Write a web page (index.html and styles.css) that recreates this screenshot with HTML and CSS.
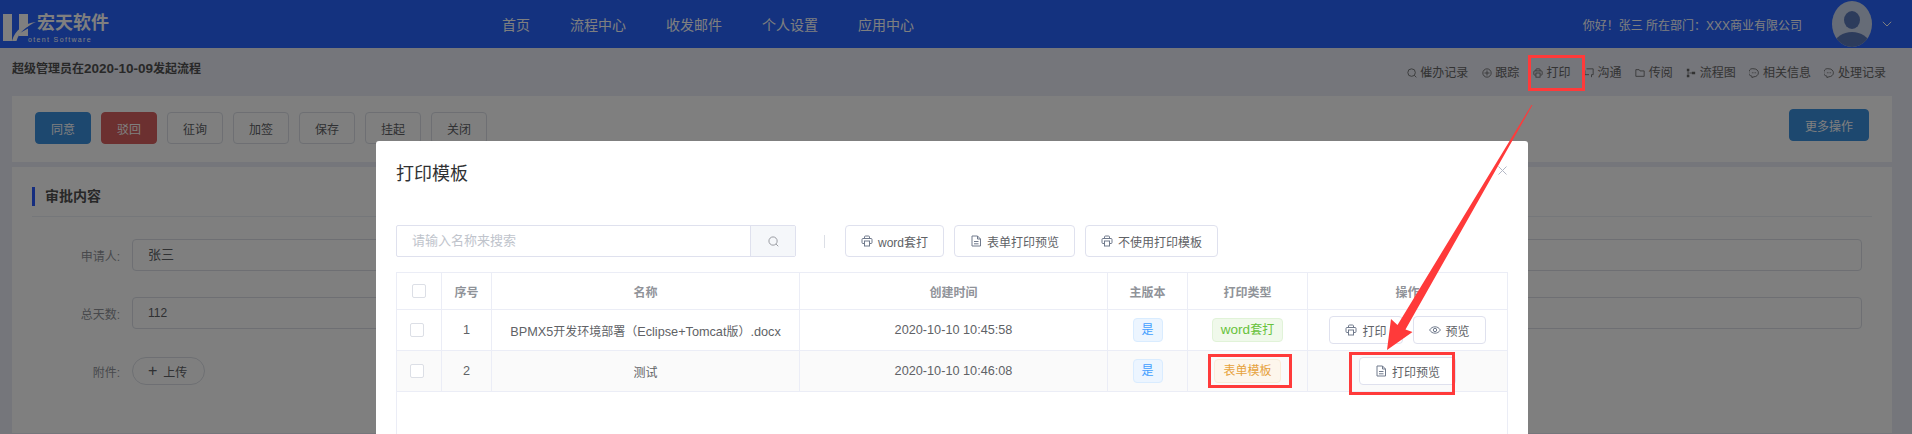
FILE: index.html
```html
<!DOCTYPE html>
<html lang="zh">
<head>
<meta charset="utf-8">
<title>打印模板</title>
<link rel="stylesheet" href="styles.css">
</head>
<body>
<svg class="defs" width="0" height="0" aria-hidden="true">
  <symbol id="i-print" viewBox="0 0 12 12"><path d="M3.500 3.500V2a1 1 0 0 1 1-1h3a1 1 0 0 1 1 1v1.500M3 8.500H2a1 1 0 0 1-1-1V4.500a1 1 0 0 1 1-1h8a1 1 0 0 1 1 1v3a1 1 0 0 1-1 1H9" fill="none" stroke="currentColor"/><rect x="3.500" y="6" width="5" height="5" fill="none" stroke="currentColor"/></symbol>
  <symbol id="i-file" viewBox="0 0 12 12"><path d="M2 1h5.500L10.500 4v7H2zM7.500 1v3h3M4 6.500h4.500M4 8.800h4.500" fill="none" stroke="currentColor"/></symbol>
  <symbol id="i-eye" viewBox="0 0 12 12"><path d="M.6 6C2 3.800 3.900 2.800 6 2.800S10 3.800 11.400 6C10 8.200 8.100 9.200 6 9.200S2 8.200 .6 6z" fill="none" stroke="currentColor"/><circle cx="6" cy="6" r="1.700" fill="none" stroke="currentColor"/></symbol>
  <symbol id="i-search" viewBox="0 0 12 12"><circle cx="5.500" cy="5.500" r="4.500" fill="none" stroke="currentColor"/><path d="M8.800 8.800l2.400 2.400" stroke="currentColor"/></symbol>
  <symbol id="i-track" viewBox="0 0 12 12"><circle cx="6" cy="6" r="5" fill="none" stroke="currentColor"/><path d="M6 3v6M3 6h6" stroke="currentColor"/></symbol>
  <symbol id="i-chat2" viewBox="0 0 12 12"><path d="M3 1h8v7H9v3M1 3v5h5" fill="none" stroke="currentColor"/></symbol>
  <symbol id="i-folder" viewBox="0 0 12 12"><path d="M1 2h4l1 1.500h5V10H1z" fill="none" stroke="currentColor"/></symbol>
  <symbol id="i-flow" viewBox="0 0 12 12"><path d="M1 1h3v3H1zM1 8h3v3H1zM7 4.500h4v3H7z" fill="currentColor"/><path d="M2.500 4v4M4 6h3" stroke="currentColor"/></symbol>
  <symbol id="i-chat" viewBox="0 0 12 12"><path d="M6 1a5 4.500 0 0 1 0 9.500l-2.500 1v-1.700A5 4.500 0 0 1 6 1z" fill="none" stroke="currentColor"/><path d="M3.500 5.700h1M5.500 5.700h1M7.500 5.700h1" stroke="currentColor"/></symbol>
</svg>

<div class="page">
  <header class="top">
    <div class="logo">
      <svg class="logo-h" width="34" height="30" viewBox="0 0 34 30" aria-hidden="true">
        <path d="M0 1h9v27H0zM16 1h9v12.500l-9 3.500z" fill="#fff"/>
        <path d="M9 28C12 17 21 10.500 33 9 24 13 16 19 13.500 28z" fill="#fff"/>
        <path d="M16 20.500l9-5V23H16z" fill="#fff"/>
      </svg>
      <div class="logo-text">
        <span class="logo-cn">宏天软件</span>
        <span class="logo-en">otent Software</span>
      </div>
    </div>
    <nav class="nav">
      <a>首页</a><a>流程中心</a><a>收发邮件</a><a>个人设置</a><a>应用中心</a>
    </nav>
    <div class="user">
      <span class="hello">你好！张三 所在部门：XXX商业有限公司</span>
      <svg class="avatar" width="40" height="48" viewBox="0 0 40 48" aria-hidden="true">
        <defs><clipPath id="av"><ellipse cx="20" cy="24" rx="20" ry="23"/></clipPath></defs>
        <ellipse cx="20" cy="24" rx="20" ry="23" fill="#cdd8ee"/>
        <g clip-path="url(#av)" fill="#5b78b8"><ellipse cx="20" cy="20" rx="8" ry="9"/><ellipse cx="20" cy="44" rx="17" ry="12"/></g>
      </svg>
      <svg class="chev" width="10" height="6" viewBox="0 0 10 6" aria-hidden="true"><path d="M.8.800L5 5l4.200-4.200" fill="none" stroke="#fff"/></svg>
    </div>
  </header>

  <div class="subbar">
    <div class="sub-title">超级管理员在<span class="sub-date">2020-10-09</span>发起流程</div>
    <div class="links">
      <a><svg class="ico"><use href="#i-search"/></svg>催办记录</a>
      <a><svg class="ico"><use href="#i-track"/></svg>跟踪</a>
      <a><svg class="ico"><use href="#i-print"/></svg>打印</a>
      <a><svg class="ico"><use href="#i-chat2"/></svg>沟通</a>
      <a><svg class="ico"><use href="#i-folder"/></svg>传阅</a>
      <a><svg class="ico"><use href="#i-flow"/></svg>流程图</a>
      <a><svg class="ico"><use href="#i-chat"/></svg>相关信息</a>
      <a><svg class="ico"><use href="#i-chat"/></svg>处理记录</a>
    </div>
  </div>

  <section class="card actions">
    <div class="btns">
      <button class="btn primary">同意</button>
      <button class="btn danger">驳回</button>
      <button class="btn">征询</button>
      <button class="btn">加签</button>
      <button class="btn">保存</button>
      <button class="btn">挂起</button>
      <button class="btn">关闭</button>
    </div>
    <button class="btn primary wide">更多操作</button>
  </section>

  <section class="card content">
    <h3 class="sec-head"><span class="sec-title">审批内容</span></h3>
    <div class="form">
      <div class="row"><label class="lbl">申请人:</label><div class="field">张三</div></div>
      <div class="row"><label class="lbl">总天数:</label><div class="field num">112</div></div>
      <div class="row"><label class="lbl">附件:</label><button class="upload"><span class="plus">+</span>上传</button></div>
    </div>
  </section>

  <div class="mask"></div>

  <div class="modal">
    <h2 class="m-title">打印模板</h2>
    <svg class="m-close" width="9" height="9" viewBox="0 0 9 9" aria-hidden="true"><path d="M.5.500l8 8M8.500.500l-8 8" stroke="#b4b8c6"/></svg>
    <div class="m-tools">
      <div class="search">
        <span class="ph">请输入名称来搜索</span>
        <span class="s-btn"><svg class="ico-s"><use href="#i-search"/></svg></span>
      </div>
      <span class="vline"></span>
      <div class="m-btns">
        <button class="mbtn"><svg class="ico-b"><use href="#i-print"/></svg>word套打</button>
        <button class="mbtn"><svg class="ico-b"><use href="#i-file"/></svg>表单打印预览</button>
        <button class="mbtn"><svg class="ico-b"><use href="#i-print"/></svg>不使用打印模板</button>
      </div>
    </div>
    <div class="tbl-wrap">
      <table class="tbl">
        <colgroup><col class="c1"><col class="c2"><col class="c3"><col class="c4"><col class="c5"><col class="c6"><col class="c7"></colgroup>
        <thead>
          <tr><th><span class="check"></span></th><th>序号</th><th>名称</th><th>创建时间</th><th>主版本</th><th>打印类型</th><th>操作</th></tr>
        </thead>
        <tbody>
          <tr>
            <td><span class="check row-check"></span></td>
            <td class="lat">1</td>
            <td><span class="lat">BPMX5</span>开发环境部署（<span class="lat">Eclipse+Tomcat</span>版）<span class="lat">.docx</span></td>
            <td class="lat">2020-10-10 10:45:58</td>
            <td><span class="tag blue">是</span></td>
            <td><span class="tag green"><span class="tag-lat">word</span>套打</span></td>
            <td><div class="ops"><button class="mbtn small"><svg class="ico-b"><use href="#i-print"/></svg>打印</button><button class="mbtn small"><svg class="ico-b"><use href="#i-eye"/></svg>预览</button></div></td>
          </tr>
          <tr class="alt">
            <td><span class="check row-check"></span></td>
            <td class="lat">2</td>
            <td>测试</td>
            <td class="lat">2020-10-10 10:46:08</td>
            <td><span class="tag blue">是</span></td>
            <td><span class="tag orange">表单模板</span></td>
            <td><div class="ops"><button class="mbtn small"><svg class="ico-b"><use href="#i-file"/></svg>打印预览</button></div></td>
          </tr>
        </tbody>
      </table>
    </div>
  </div>

  <svg class="marks" width="1912" height="434" viewBox="0 0 1912 434" aria-hidden="true">
    <g fill="none" stroke="#ff3a3a" stroke-width="3">
      <rect x="1529.500" y="56.500" width="54" height="33"/>
      <rect x="1209.500" y="355.500" width="81" height="31"/>
      <rect x="1350.500" y="353.500" width="103" height="40"/>
    </g>
    <path d="M1532.500 105 1405.500 329.500 1412.500 332 1387 350 1391 319 1397.500 325 1531.500 105z" fill="#ff3a3a"/>
  </svg>
</div>
</body>
</html>
```
FILE: styles.css
```css
* { box-sizing: border-box; }
html, body { margin: 0; height: 434px; overflow: hidden; }
body { font-family: "Liberation Sans", "Noto Sans CJK SC", sans-serif; font-size: 12px; color: #606266; }
.defs { position: absolute; }
button { font: inherit; cursor: pointer; }
h2, h3 { margin: 0; font-weight: normal; }

.page { position: relative; height: 434px; overflow: hidden; background: #eaecf6; }

/* header */
.top { display: flex; align-items: center; height: 48px; background: #2864fe; color: #fff; }
.logo { flex: 0 0 502px; display: flex; align-items: flex-start; padding: 9px 0 0 3px; }
.logo-text { display: flex; flex-direction: column; }
.logo-cn { font-size: 18px; font-weight: bold; line-height: 21px; }
.logo-en { font-size: 7px; line-height: 9px; letter-spacing: 1.35px; margin: 1px 0 0 -9px; }
.nav { display: flex; gap: 40px; font-size: 14px; }
.user { margin-left: auto; display: flex; align-items: center; padding-right: 20px; }
.hello { margin-right: 30px; }
.chev { margin-left: 10px; }

/* sub bar */
.subbar { display: flex; justify-content: space-between; align-items: flex-start; height: 48px; padding: 0 26px 0 12px; color: #666; }
.sub-title { margin-top: 12px; font-weight: bold; line-height: 18px; color: #505050; }
.sub-date { font-size: 13.5px; }
.links { display: flex; gap: 13.6px; margin-top: 16px; line-height: 18px; }
.links a { display: flex; align-items: center; gap: 3.5px; }
.ico { width: 10px; height: 10px; }

/* cards */
.card { margin: 0 20px 0 12px; background: #fff; }
.actions { display: flex; justify-content: space-between; align-items: flex-start; height: 66px; padding: 13px 23px; }
.btns { display: flex; gap: 10px; margin-top: 3px; }
.btn { width: 56px; height: 32px; padding: 0; border: 1px solid #dcdfe6; border-radius: 4px; background: #fff; color: #606266; }
.btn.wide { width: 80px; }
.btn.primary { background: #3b90de; border-color: #3b90de; color: #fff; }
.btn.danger { background: #d86060; border-color: #d86060; color: #fff; }

.content { margin-top: 5px; height: 266px; padding: 0 20px; }
.sec-head { padding: 20px 0 10px; border-bottom: 1px solid #ebeef5; }
.sec-title { display: block; padding-left: 10px; border-left: 3px solid #2a5bff; font-size: 14px; font-weight: bold; line-height: 19px; color: #505050; }
.form { padding: 22px 10px 0 0; }
.row { display: flex; align-items: center; margin-bottom: 26px; }
.row:nth-child(2) { margin-bottom: 28px; }
.lbl { flex: 0 0 88px; text-align: right; margin-right: 12px; color: #909399; }
.field { flex: 1; height: 32px; padding: 0 15px; border: 1px solid #dcdfe6; border-radius: 4px; font-size: 13px; line-height: 30px; color: #606266; }
.field.num { font-size: 12px; }
.upload { display: flex; align-items: center; height: 28px; width: 73px; padding: 0 0 0 15px; border: 1px solid #dcdfe6; border-radius: 14px; background: #fff; color: #606266; }
.plus { font-size: 16px; margin-right: 6px; line-height: 1; font-weight: normal; }

.mask { position: absolute; inset: 0; background: rgba(0, 0, 0, .5); }

/* modal */
.modal { position: absolute; left: 376px; top: 141px; bottom: 0; width: 1152px; padding: 20px 20px 0; background: #fff; border-radius: 3px 3px 0 0; }
.m-title { margin: 1px 0 39px; font-size: 18px; line-height: 24px; color: #303133; }
.m-close { position: absolute; right: 21px; top: 25px; }
.m-tools { display: flex; align-items: center; height: 32px; }
.search { display: flex; width: 400px; height: 32px; border: 1px solid #dfe1ee; border-radius: 2px; }
.ph { flex: 1; padding-left: 15px; font-size: 13px; line-height: 30px; color: #c0c4cc; }
.s-btn { flex: 0 0 45px; display: flex; align-items: center; justify-content: center; background: #f5f7fa; border-left: 1px solid #dfe1ee; color: #909399; }
.ico-s { width: 11px; height: 11px; }
.vline { width: 1px; height: 13px; margin: 0 20px 0 28px; background: #dcdfe6; }
.m-btns { display: flex; gap: 10px; }
.mbtn { display: inline-flex; align-items: center; height: 32px; padding: 0 15px; border: 1px solid #dfe1ee; border-radius: 4px; background: #fff; color: #606266; white-space: nowrap; }
.mbtn.small { height: 28px; }
.ico-b { width: 12px; height: 12px; margin-right: 5px; color: #707a8c; }

/* table */
.tbl-wrap { width: 1112px; margin-top: 15px; height: 162px; border: 1px solid #ebedf6; border-bottom: 0; }
.tbl { width: 1110px; table-layout: fixed; border-collapse: separate; border-spacing: 0; }
.c1 { width: 45px; } .c2 { width: 50px; } .c3 { width: 308px; } .c4 { width: 308px; }
.c5 { width: 80px; } .c6 { width: 120px; } .c7 { width: 199px; }
.tbl th, .tbl td { padding: 0; text-align: center; vertical-align: middle; border-right: 1px solid #ebedf6; border-bottom: 1px solid #ebedf6; }
.tbl th:last-child, .tbl td:last-child { border-right: 0; }
.tbl th { height: 37px; color: #909399; font-weight: bold; font-size: 12px; }
.tbl td { height: 41px; color: #606266; }
.tbl .alt td { background: #fafafa; }
.lat { font-size: 12.7px; }
.check { display: inline-block; width: 14px; height: 14px; vertical-align: middle; border: 1px solid #dcdfe6; border-radius: 2px; background: #fff; }
.row-check { margin-right: 4px; }
.tag { display: inline-block; height: 24px; padding: 0 8px; line-height: 22px; border: 1px solid; border-radius: 4px; vertical-align: middle; }
.tag.blue { color: #409eff; background: #ecf5ff; border-color: #d9ecff; width: 30px; padding: 0; }
.tag.green { color: #67c23a; background: #f0f9eb; border-color: #e1f3d8; }
.tag-lat { font-size: 13.5px; }
.tag.orange { color: #e6a23c; background: #fdf6ec; border-color: #faecd8; }
.ops { display: flex; justify-content: center; gap: 10px; }

/* annotations drawn on top of the screenshot */
.marks { position: absolute; left: 0; top: 0; pointer-events: none; }
```
